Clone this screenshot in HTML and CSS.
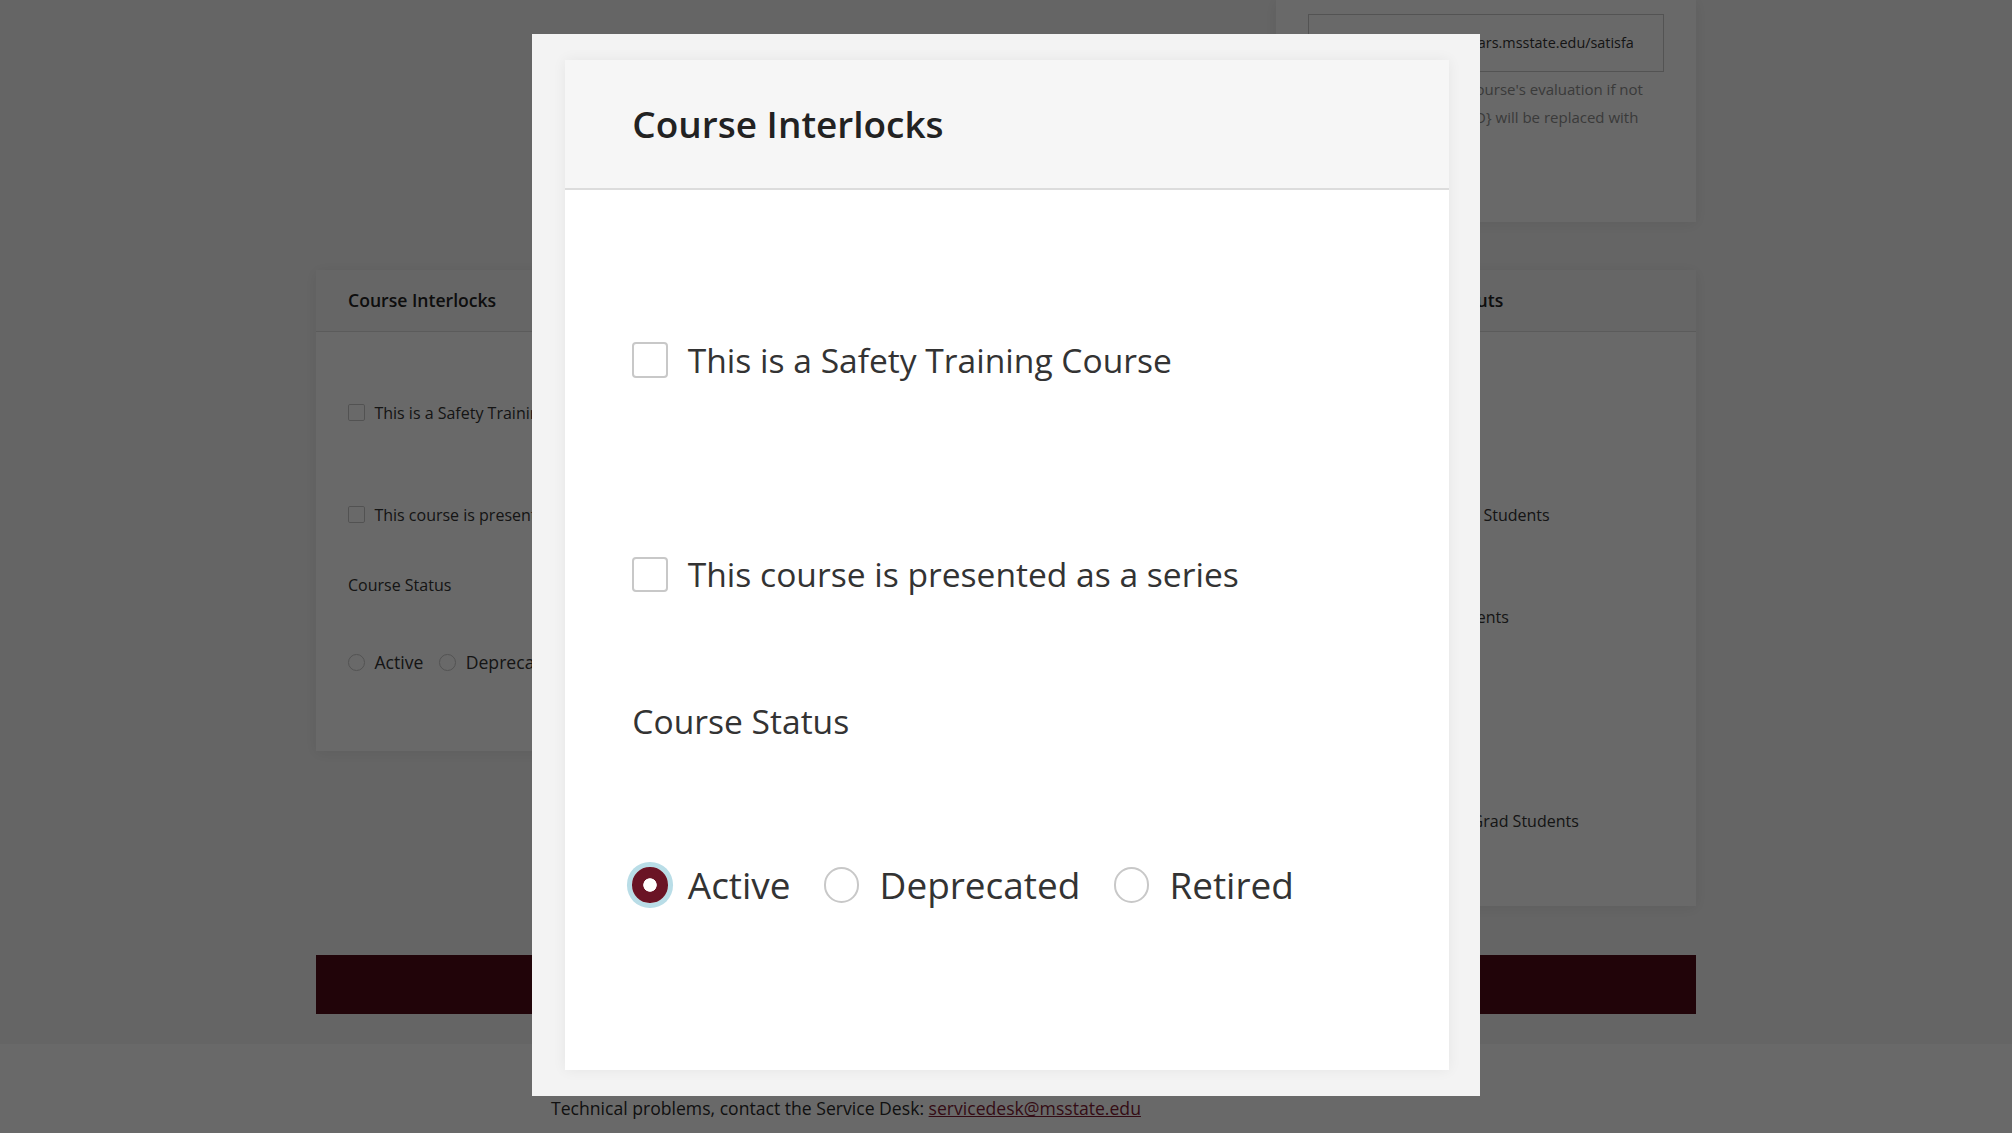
FILE: index.html
```html
<!DOCTYPE html>
<html lang="en">
<head>
<meta charset="utf-8">
<title>Course Interlocks</title>
<link rel="stylesheet" href="styles.css">
</head>
<body>
<main class="page">
  <div class="grid">
    <section class="card card-link">
      <div class="url-box">https://www.training.ars.msstate.edu/satisfa</div>
      <p class="help">An optional link to this course's evaluation if not using the default URL. {ID} will be replaced with the course ID.</p>
    </section>

    <section class="card card-left">
      <header class="card-header"><h2>Course Interlocks</h2></header>
      <div class="card-body">
        <label class="field"><span class="box"></span>This is a Safety Training Course</label>
        <label class="field"><span class="box"></span>This course is presented as a series</label>
        <div class="status-label">Course Status</div>
        <div class="radios">
          <label class="radio-opt"><span class="box radio"></span><span class="radio-text">Active</span></label>
          <label class="radio-opt"><span class="box radio"></span><span class="radio-text">Deprecated</span></label>
          <label class="radio-opt"><span class="box radio"></span><span class="radio-text">Retired</span></label>
        </div>
      </div>
    </section>

    <section class="card card-mid">
      <header class="card-header"><h2>Course Options</h2></header>
      <div class="card-body">
        <label class="field"><span class="box"></span>Requires Approval</label>
        <label class="field"><span class="box"></span>Allow Waitlist</label>
      </div>
    </section>

    <section class="card card-right">
      <header class="card-header"><h2>Participation Shortcuts</h2></header>
      <div class="card-body">
        <label class="field"><span class="box"></span>Open to Employees</label>
        <label class="field"><span class="box"></span>Admit International Students</label>
        <label class="field"><span class="box"></span>Open to Adult Students</label>
        <label class="field"><span class="box"></span>Open to Staff</label>
        <label class="field"><span class="box"></span>Open to Research Grad Students</label>
      </div>
    </section>
  </div>
  <div class="save-bar">Save Course</div>
</main>

<footer class="site-footer">
  <div class="footer-inner">
    <p>Technical problems, contact the Service Desk: <a href="#">servicedesk@msstate.edu</a></p>
  </div>
</footer>

<div class="overlay">
  <div class="modal">
    <section class="card card-zoom">
      <header class="card-header"><h2>Course Interlocks</h2></header>
      <div class="card-body">
        <label class="field"><span class="box"></span>This is a Safety Training Course</label>
        <label class="field"><span class="box"></span>This course is presented as a series</label>
        <div class="status-label">Course Status</div>
        <div class="radios">
          <label class="radio-opt"><span class="box radio on"></span><span class="radio-text">Active</span></label>
          <label class="radio-opt"><span class="box radio"></span><span class="radio-text">Deprecated</span></label>
          <label class="radio-opt"><span class="box radio"></span><span class="radio-text">Retired</span></label>
        </div>
      </div>
    </section>
  </div>
</div>
</body>
</html>
```

FILE: styles.css
```css
* { box-sizing: border-box; }

html, body { margin: 0; }

body {
  font-family: "Open Sans", "Noto Sans", sans-serif;
  font-size: 16px;
  color: #333;
  background: #f5f5f5;
  overflow: hidden;
}

.page {
  width: 1380px;
  margin: 0 auto;
  padding-bottom: 30px;
}

.grid {
  display: grid;
  grid-template-columns: repeat(3, 420px);
  column-gap: 60px;
  row-gap: 48px;
  align-items: start;
}

.card {
  background: #fff;
  box-shadow: 0 2px 14px rgba(0, 0, 0, 0.07);
}

.card-link {
  grid-column: 3;
  grid-row: 1;
  height: 222px;
  overflow: hidden;
  padding: 14px 32px 0;
}

.card-left { grid-column: 1; grid-row: 2; }
.card-mid { grid-column: 2; grid-row: 2; }
.card-right { grid-column: 3; grid-row: 2; }

.card-right .card-body { padding-bottom: 4.6em; }

.url-box {
  height: 58px;
  border: 1px solid #c9c9c9;
  padding: 0 12px 0 27px;
  font-size: 14.4px;
  line-height: 56px;
  white-space: nowrap;
  overflow: hidden;
  color: #333;
}

.help {
  margin: 3px 0 0;
  font-size: 15px;
  line-height: 28px;
  color: #8e8e8e;
}

.card-header {
  background: #f7f7f7;
  border-bottom: 0.07em solid #dcdcdc;
  padding: 1.08em 2em;
}

.card-header h2 {
  margin: 0;
  font-size: 1.1em;
  line-height: 1.5;
  font-weight: 600;
  color: #222;
}

.card-body {
  padding: 4.31em 2em 4.75em;
  background: #fff;
}

.field {
  display: flex;
  align-items: center;
  line-height: 1.5;
  white-space: nowrap;
}

.field + .field { margin-top: 4.875em; }

.status-label {
  margin-top: 2.875em;
  line-height: 1.5;
}

.radios {
  margin-top: 3.375em;
  display: flex;
  align-items: center;
  height: 1.5em;
  white-space: nowrap;
}

.radio-opt {
  display: flex;
  align-items: center;
  margin-right: 1em;
}

.radio-text {
  font-size: 1.1em;
  line-height: 1.36;
}

.box {
  flex: none;
  width: 1.05em;
  height: 1.05em;
  margin-right: 0.6em;
  border: 0.07em solid #c8c8c8;
  border-radius: 0.12em;
  background: #fff;
}

.radio { border-radius: 50%; }

.radio.on {
  border-color: #6a1425;
  background: radial-gradient(circle, #fff 0 0.19em, #6a1425 0.21em);
  box-shadow: 0 0 0 0.15em #b9dde7;
}

.save-bar {
  margin-top: 49px;
  height: 59px;
  background: #520a18;
  color: #fff;
  text-align: center;
  line-height: 59px;
  font-weight: 600;
}

.site-footer {
  background: #fff;
  padding: 51px 0 40px;
}

.footer-inner {
  width: 1380px;
  margin: 0 auto;
  padding-left: 235px;
}

.site-footer p {
  margin: 0;
  font-size: 17.6px;
  line-height: 1.5;
  color: #2a2a2a;
}

.site-footer a { color: #7f1d35; }

.overlay {
  position: fixed;
  inset: 0;
  background: rgba(0, 0, 0, 0.59);
  display: flex;
  justify-content: center;
  align-items: flex-start;
  padding-top: 34px;
}

.modal {
  background: #f3f3f3;
  padding: 26px 31px 26px 33px;
}

.card-zoom {
  font-size: 33.6px;
  width: 26.3em;
  box-shadow: 0 0 0.4em rgba(0, 0, 0, 0.06);
}

.card-zoom .card-header { background: #f6f6f6; }
```
